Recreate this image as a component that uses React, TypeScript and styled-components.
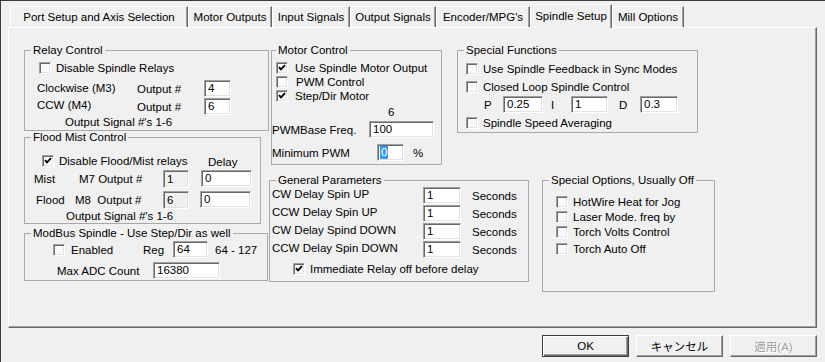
import styled, { createGlobalStyle } from "styled-components";

const GlobalStyle = createGlobalStyle`
  html, body {
    margin: 0;
    padding: 0;
    background: #f0f0f0;
  }
  body {
    font-family: "Liberation Sans", Arial, "Noto Sans CJK JP", sans-serif;
    font-size: 11.5px;
    color: #000;
  }
`;

const Window = styled.div`
  box-sizing: border-box;
  width: 825px;
  height: 362px;
  border-top: 1px solid #3c3c3c;
  border-left: 1px solid #3c3c3c;
  background: #f0f0f0;
  display: flex;
  flex-direction: column;
  overflow: hidden;
`;

const TabBar = styled.div`
  display: flex;
  align-items: flex-end;
  height: 26px;
  padding-left: 9px;
`;

const Tab = styled.div<{ $w: number; $active?: boolean }>`
  box-sizing: border-box;
  width: ${({ $w }) => $w}px;
  height: ${({ $active }) => ($active ? 24 : 21)}px;
  margin-bottom: ${({ $active }) => ($active ? -1 : 0)}px;
  padding-bottom: ${({ $active }) => ($active ? 2 : 0)}px;
  position: relative;
  z-index: ${({ $active }) => ($active ? 2 : 0)};
  display: flex;
  align-items: center;
  justify-content: center;
  white-space: nowrap;
  background: #f0f0f0;
  border-top: 1px solid #fff;
  border-left: 1px solid #fff;
  border-right: 1px solid #696969;
  box-shadow: inset -1px 0 0 #a0a0a0;
`;

const Panel = styled.div`
  box-sizing: border-box;
  margin-left: 7px;
  width: 809px;
  height: 301px;
  border-top: 1px solid #fff;
  border-left: 1px solid #fff;
  border-right: 1px solid #696969;
  border-bottom: 1px solid #696969;
  box-shadow: inset -1px -1px 0 #a0a0a0;
  padding: 16px 0 0 15px;
  display: flex;
  align-items: flex-start;
`;

const Column = styled.div`
  display: flex;
  flex-direction: column;
  align-items: flex-start;
`;

const GroupRow = styled.div<{ $mt?: number }>`
  display: flex;
  align-items: flex-start;
  margin-top: ${({ $mt = 0 }) => $mt}px;
`;

const GroupBox = styled.fieldset<{ $w: number; $h: number; $ml?: number; $mt?: number }>`
  box-sizing: border-box;
  width: ${({ $w }) => $w}px;
  height: ${({ $h }) => $h}px;
  min-width: 0;
  margin: ${({ $mt = 0 }) => $mt}px 0 0 ${({ $ml = 0 }) => $ml}px;
  padding: 0;
  border: 1px solid #a9a9a9;
`;

const Title = styled.legend<{ $indent?: number }>`
  margin-left: ${({ $indent = 6 }) => $indent}px;
  padding: 0 2px;
  line-height: 12px;
  white-space: nowrap;
`;

const Row = styled.div<{ $mt?: number; $pl?: number; $h?: number }>`
  display: flex;
  align-items: center;
  height: ${({ $h = 14 }) => $h}px;
  margin-top: ${({ $mt = 0 }) => $mt}px;
  padding-left: ${({ $pl = 0 }) => $pl}px;
  white-space: nowrap;
`;

const Text = styled.span<{ $w?: number; $ml?: number; $pl?: number; $lift?: number }>`
  display: inline-block;
  box-sizing: border-box;
  width: ${({ $w }) => ($w ? `${$w}px` : "auto")};
  margin-left: ${({ $ml = 0 }) => $ml}px;
  padding-left: ${({ $pl = 0 }) => $pl}px;
  margin-bottom: ${({ $lift = 0 }) => ($lift > 0 ? $lift * 2 : 0)}px;
  margin-top: ${({ $lift = 0 }) => ($lift < 0 ? -$lift * 2 : 0)}px;
  line-height: 14px;
  flex: none;
`;

const Field = styled.div<{ $w: number; $h?: number; $ml?: number; $disabled?: boolean }>`
  box-sizing: border-box;
  width: ${({ $w }) => $w}px;
  height: ${({ $h = 17 }) => $h}px;
  margin-left: ${({ $ml = 0 }) => $ml}px;
  flex: none;
  display: flex;
  align-items: flex-end;
  padding: 0 0 1px 3px;
  line-height: 13px;
  background: ${({ $disabled }) => ($disabled ? "#f0f0f0" : "#fff")};
  border: 1px solid;
  border-color: #a0a0a0 #fff #fff #a0a0a0;
  box-shadow: inset 1px 1px 0 #696969, inset -1px -1px 0 #e3e3e3;
`;

const Selected = styled.span`
  background: #3399ff;
  color: #fff;
  padding: 0 1px;
  margin-left: -1px;
`;

const Box = styled.span`
  box-sizing: border-box;
  width: 12px;
  height: 12px;
  flex: none;
  display: inline-flex;
  align-items: center;
  justify-content: center;
  background: #fafafa;
  border: 1px solid;
  border-color: #a0a0a0 #fff #fff #a0a0a0;
  box-shadow: inset 1px 1px 0 #696969, inset -1px -1px 0 #e3e3e3;
`;

const CheckLabel = styled.span<{ $gap?: number; $w?: number }>`
  margin-left: ${({ $gap = 5 }) => $gap}px;
  width: ${({ $w }) => ($w ? `${$w}px` : "auto")};
  line-height: 14px;
  flex: none;
`;

const ButtonRow = styled.div`
  display: flex;
  justify-content: flex-end;
  gap: 7px;
  margin-top: 7px;
  padding-right: 8px;
`;

const Button = styled.div<{ $default?: boolean; $disabled?: boolean }>`
  box-sizing: border-box;
  width: 87px;
  height: 22px;
  display: flex;
  align-items: center;
  justify-content: center;
  background: #f0f0f0;
  color: ${({ $disabled }) => ($disabled ? "#a0a0a0" : "#000")};
  text-shadow: ${({ $disabled }) => ($disabled ? "1px 1px 0 #fff" : "none")};
  border: 1px solid;
  border-color: ${({ $default }) =>
    $default ? "#3c3c3c" : "#fff #696969 #696969 #fff"};
  box-shadow: ${({ $default }) =>
    $default
      ? "inset 1px 1px 0 #fff, inset -1px -1px 0 #696969, inset -2px -2px 0 #a0a0a0"
      : "inset -1px -1px 0 #a0a0a0"};
`;

type CheckProps = Readonly<{
  label: string;
  checked?: boolean;
  gap?: number;
  width?: number;
}>;

const Check = ({ label, checked = false, gap, width }: CheckProps) => (
  <>
    <Box>
      {checked && (
        <svg width="8" height="8" viewBox="0 0 8 8">
          <polyline points="1,3.2 3,5.4 7,1.2" fill="none" stroke="#000" strokeWidth="1.9" />
        </svg>
      )}
    </Box>
    <CheckLabel $gap={gap} $w={width}>
      {label}
    </CheckLabel>
  </>
);

const tabs = [
  { name: "Port Setup and Axis Selection", w: 178 },
  { name: "Motor Outputs", w: 84 },
  { name: "Input Signals", w: 78 },
  { name: "Output Signals", w: 86 },
  { name: "Encoder/MPG's", w: 94 },
  { name: "Spindle Setup", w: 82, active: true },
  { name: "Mill Options", w: 72 },
];

const delays = [
  "CW Delay Spin UP",
  "CCW Delay Spin UP",
  "CW Delay Spind DOWN",
  "CCW Delay Spin DOWN",
];

const options = [
  { label: "HotWire Heat for Jog", mt: 9 },
  { label: "Laser Mode. freq by", mt: 1 },
  { label: "Torch Volts Control", mt: 1 },
  { label: "Torch Auto Off", mt: 3 },
];

const App = () => {
  return (
    <>
      <GlobalStyle />
      <Window>
        <TabBar>
          {tabs.map((t) => (
            <Tab key={t.name} $w={t.w} $active={t.active}>
              {t.name}
            </Tab>
          ))}
        </TabBar>
        <Panel>
          <Column>
            <GroupBox $w={245} $h={87}>
              <Title>Relay Control</Title>
              <Row $mt={5} $pl={14}>
                <Check label="Disable Spindle Relays" />
              </Row>
              <Row $mt={5} $pl={12} $h={17}>
                <Text $w={100} $lift={0.5}>Clockwise (M3)</Text>
                <Text $w={67}>Output #</Text>
                <Field $w={27}>4</Field>
              </Row>
              <Row $mt={1} $pl={12} $h={17}>
                <Text $w={100} $lift={2}>CCW (M4)</Text>
                <Text $w={67}>Output #</Text>
                <Field $w={27}>6</Field>
              </Row>
              <Row $pl={40}>
                <Text>Output Signal #'s 1-6</Text>
              </Row>
            </GroupBox>

            <GroupBox $w={237} $h={93}>
              <Title>Flood Mist Control</Title>
              <Row $mt={11} $pl={17}>
                <Check label="Disable Flood/Mist relays" checked width={149} />
                <Text $lift={-1}>Delay</Text>
              </Row>
              <Row $mt={1} $pl={9} $h={19}>
                <Text $w={45}>Mist</Text>
                <Text $w={84}>M7 Output #</Text>
                <Field $w={26} $h={18} $disabled>1</Field>
                <Field $w={51} $ml={12}>0</Field>
              </Row>
              <Row $mt={2} $pl={11} $h={19}>
                <Text $w={39}>Flood</Text>
                <Text $w={88}>M8&nbsp;&nbsp;Output #</Text>
                <Field $w={26} $h={18} $disabled>6</Field>
                <Field $w={51} $ml={11}>0</Field>
              </Row>
              <Row $pl={41}>
                <Text>Output Signal #'s 1-6</Text>
              </Row>
            </GroupBox>

            <GroupBox $w={244} $h={54} $mt={3}>
              <Title>ModBus Spindle - Use Step/Dir as well</Title>
              <Row $mt={2} $pl={28} $h={17}>
                <Check label="Enabled" gap={6} width={72} />
                <Text $w={30}>Reg</Text>
                <Field $w={35}>64</Field>
                <Text $ml={7}>64 - 127</Text>
              </Row>
              <Row $mt={4} $pl={32} $h={17}>
                <Text $w={96}>Max ADC Count</Text>
                <Field $w={67}>16380</Field>
              </Row>
            </GroupBox>
          </Column>

          <Column>
            <GroupRow>
              <GroupBox $w={171} $h={121} $ml={2}>
                <Title $indent={4}>Motor Control</Title>
                <Row $mt={5} $pl={4}>
                  <Check label="Use Spindle Motor Output" checked gap={7} />
                </Row>
                <Row $pl={4}>
                  <Check label="PWM Control" gap={8} />
                </Row>
                <Row $pl={4}>
                  <Check label="Step/Dir Motor" checked gap={7} />
                </Row>
                <Row $mt={1} $pl={116} $h={16}>
                  <Text>6</Text>
                </Row>
                <Row $mt={1} $h={17}>
                  <Text $w={97}>PWMBase Freq.</Text>
                  <Field $w={65}>100</Field>
                </Row>
                <Row $mt={6} $h={17}>
                  <Text $w={105}>Minimum PWM</Text>
                  <Field $w={27}>
                    <Selected>0</Selected>
                  </Field>
                  <Text $ml={9}>%</Text>
                </Row>
              </GroupBox>

              <GroupBox $w={241} $h={89} $ml={15}>
                <Title>Special Functions</Title>
                <Row $mt={6} $pl={8}>
                  <Check label="Use Spindle Feedback in Sync Modes" />
                </Row>
                <Row $mt={4} $pl={8}>
                  <Check label="Closed Loop Spindle Control" />
                </Row>
                <Row $mt={2} $pl={26} $h={17}>
                  <Text $w={19}>P</Text>
                  <Field $w={40}>0.25</Field>
                  <Text $w={28} $pl={8}>I</Text>
                  <Field $w={37}>1</Field>
                  <Text $w={32} $pl={11}>D</Text>
                  <Field $w={38}>0.3</Field>
                </Row>
                <Row $mt={3} $pl={8}>
                  <Check label="Spindle Speed Averaging" />
                </Row>
              </GroupBox>
            </GroupRow>

            <GroupRow $mt={9}>
              <GroupBox $w={260} $h={108}>
                <Title>General Parameters</Title>
                {delays.map((d) => (
                  <Row key={d} $mt={1} $pl={2} $h={17}>
                    <Text $w={151} $lift={2}>{d}</Text>
                    <Field $w={38}>1</Field>
                    <Text $ml={11}>Seconds</Text>
                  </Row>
                ))}
                <Row $mt={4} $pl={23}>
                  <Check label="Immediate Relay off before delay" checked />
                </Row>
              </GroupBox>

              <GroupBox $w={173} $h={118} $ml={13}>
                <Title>Special Options, Usually Off</Title>
                {options.map((o) => (
                  <Row key={o.label} $mt={o.mt} $pl={13}>
                    <Check label={o.label} />
                  </Row>
                ))}
              </GroupBox>
            </GroupRow>
          </Column>
        </Panel>

        <ButtonRow>
          <Button $default>OK</Button>
          <Button>キャンセル</Button>
          <Button $disabled>適用(A)</Button>
        </ButtonRow>
      </Window>
    </>
  );
};

export default App;
